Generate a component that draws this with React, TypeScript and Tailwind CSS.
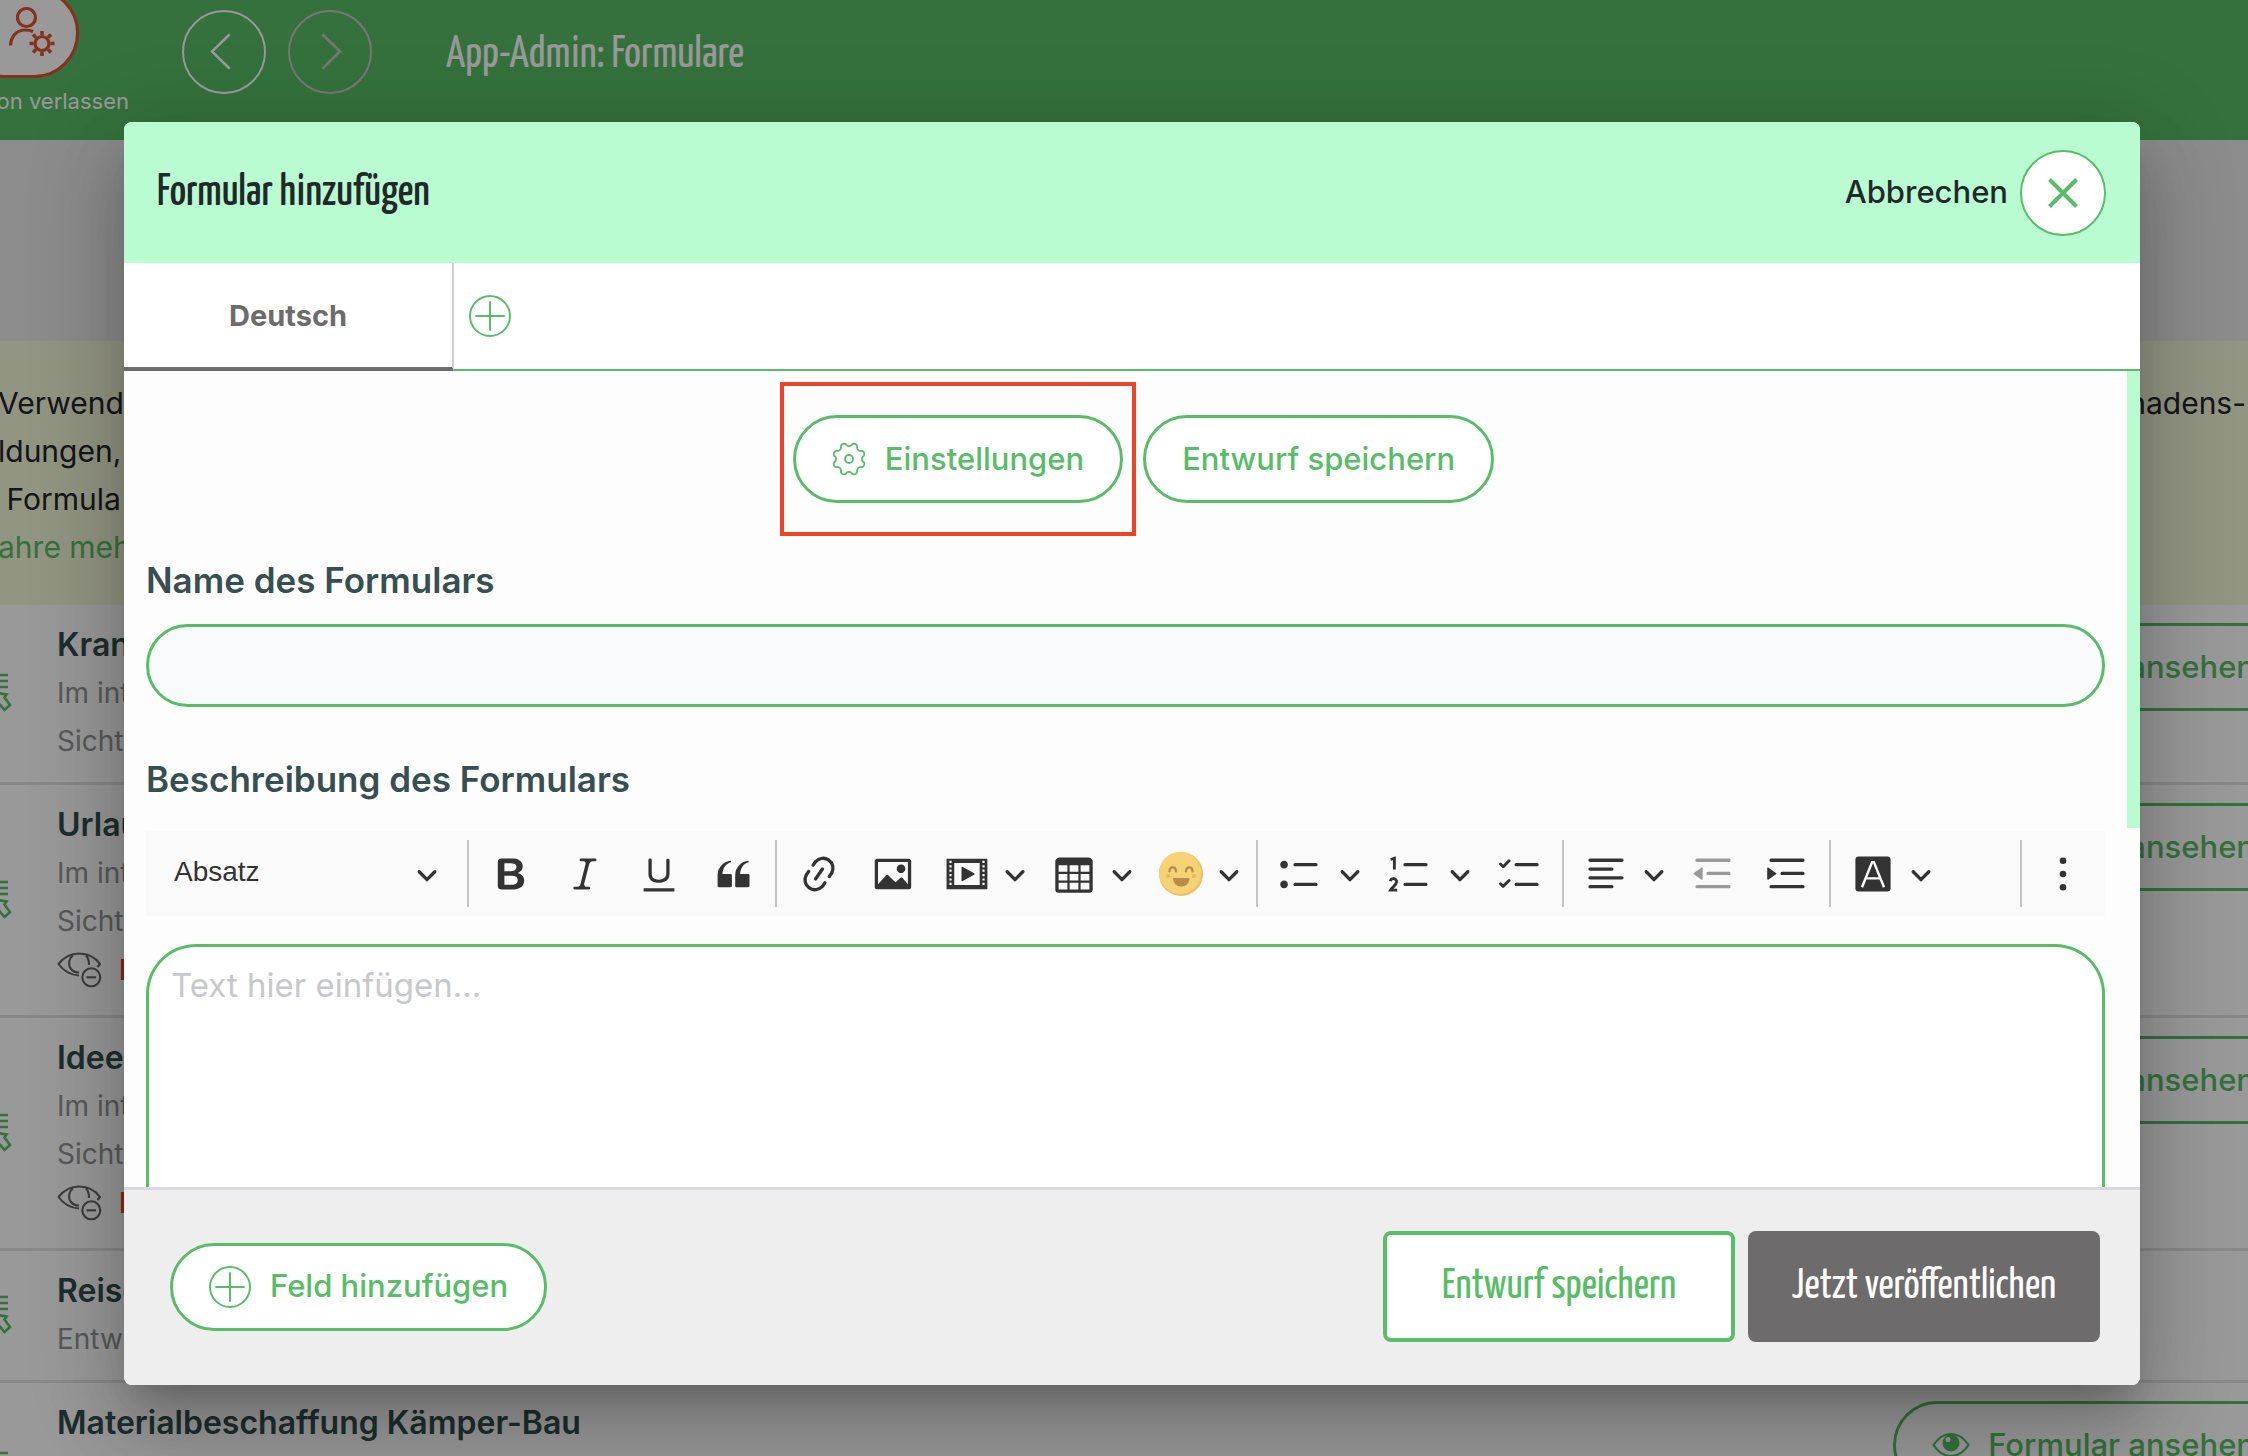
import type { ReactNode } from "react";

const GREEN = "#57bd66";
const INK = "#333333";

/* ---------- icons ---------- */

function PlusCircle() {
  return (
    <svg width="42" height="42" viewBox="0 0 42 42" fill="none" stroke={GREEN} strokeWidth="2" strokeLinecap="round" aria-hidden="true">
      <circle cx="21" cy="21" r="20" />
      <path d="M21 7v28M7 21h28" />
    </svg>
  );
}

const cogPath =
  Array.from({ length: 144 }, (_, i) => {
    const a = (i / 144) * Math.PI * 2;
    const wave = Math.cos(8 * (a - Math.PI / 8));
    const r = 14.6 + 1.7 * Math.sign(wave) * Math.pow(Math.abs(wave), 0.6);
    return `${i ? "L" : "M"}${(17 + r * Math.cos(a)).toFixed(2)} ${(17 + r * Math.sin(a)).toFixed(2)}`;
  }).join("") + "Z";

function Cog() {
  return (
    <svg width="34" height="34" viewBox="0 0 34 34" fill="none" stroke={GREEN} strokeWidth="1.8" strokeLinejoin="round" aria-hidden="true">
      <path d={cogPath} />
      <circle cx="17" cy="17" r="4" />
    </svg>
  );
}

function UserCog() {
  return (
    <svg width="46" height="50" viewBox="0 0 46 50" fill="none" stroke="#e2502f" strokeWidth="3.2" aria-hidden="true">
      <circle cx="17.5" cy="10.5" r="9" />
      <path d="M1.5 38.5C2 29 8 23 16 23c3.500 0 6 .5 8 1.500" />
      <circle cx="33" cy="36.500" r="7" />
      <path
        d="M33 28v-4M33 49v-4M41.500 36.500h4M20.500 36.500h4M39 30.500l3-3M24 45.500l3-3M39 42.500l3 3M24 27.500l3 3"
        strokeWidth="3.600"
      />
    </svg>
  );
}

function FormGlyph() {
  return (
    <svg width="12" height="44" viewBox="0 0 12 44" fill="none" stroke={GREEN} strokeWidth="2.6" aria-hidden="true">
      <path d="M0 2h8M0 8h8M0 14h8" />
      <path d="M-2 20l8.500 1.500-2 3 5.500 7.500-5.500 5-6-7" />
    </svg>
  );
}

function HiddenEye() {
  return (
    <svg width="46" height="38" viewBox="0 0 46 38" fill="none" stroke="#66666a" strokeWidth="2.100" strokeLinejoin="round" aria-hidden="true">
      <path d="M22 24.500C13 24 5.500 18.500 1.500 13 7 6 14 2.500 22 2.500S38 6 43 13l-2.500 3" />
      <path d="M16 4.500c-4.500 3-5 10-2 13.500 2 2.500 5 3.500 8 3.500M29 4.500c2.500 2.500 3 5.500 3 9.500" />
      <circle cx="34.300" cy="26.300" r="9" />
      <path d="M29.500 26.300h9.600" />
    </svg>
  );
}

function Eye() {
  return (
    <svg width="38" height="26" viewBox="0 0 38 26" aria-hidden="true">
      <path d="M1.500 13C6 6 12 2 19 2s13 4 17.500 11C32 20 26 24 19 24S6 20 1.500 13z" fill="none" stroke={GREEN} strokeWidth="2.200" />
      <circle cx="19" cy="11" r="8.500" fill={GREEN} />
      <circle cx="16" cy="7.500" r="2.500" fill="#fff" />
    </svg>
  );
}

function Chevron() {
  return (
    <svg width="22" height="22" viewBox="0 0 10 10" fill={INK} aria-hidden="true">
      <path d="M.941 4.523a.75.75 0 1 1 1.060-1.060l3.006 3.005 3.005-3.005a.75.75 0 1 1 1.060 1.060l-3.549 3.550a.75.75 0 0 1-1.168-.136L.941 4.523z" />
    </svg>
  );
}

function Glyph({ d, children }: { d?: string; children?: ReactNode }) {
  return (
    <svg width="44" height="44" viewBox="0 0 20 20" fill="currentColor" aria-hidden="true">
      {d && <path d={d} />}
      {children}
    </svg>
  );
}

const paths = {
  bold: "M10.187 17H5.773c-.637 0-1.092-.138-1.364-.415-.273-.277-.409-.718-.409-1.323V4.738c0-.617.14-1.062.419-1.332.279-.27.73-.406 1.354-.406h4.680c.69 0 1.288.041 1.793.124.506.083.96.242 1.360.478.341.197.644.447.906.75a3.262 3.262 0 0 1 .808 2.162c0 1.401-.722 2.426-2.167 3.075C15.050 10.175 16 11.315 16 13.010a3.756 3.756 0 0 1-2.296 3.504 6.100 6.100 0 0 1-1.517.377c-.571.073-1.238.11-2 .11zm-.217-6.217H7v4.087h3.069c1.977 0 2.965-.69 2.965-2.072 0-.707-.256-1.220-.768-1.537-.512-.319-1.277-.478-2.296-.478zM7 5.130v3.619h2.606c.729 0 1.292-.067 1.690-.2a1.600 1.600 0 0 0 .91-.765c.165-.267.247-.566.247-.897 0-.707-.26-1.176-.778-1.409-.519-.232-1.310-.348-2.375-.348H7z",
  italic: "m9.586 14.633.021.004c-.036.335.095.655.393.962.082.083.173.15.274.201h1.474a.6.6 0 1 1 0 1.200H5.304a.6.6 0 0 1 0-1.200h1.150c.474-.07.809-.182 1.005-.334.157-.122.291-.32.404-.597l2.416-9.550a1.053 1.053 0 0 0-.281-.823 1.120 1.120 0 0 0-.442-.296H8.150a.6.6 0 0 1 0-1.200h6.443a.6.6 0 1 1 0 1.200h-1.195c-.376.056-.65.155-.823.296-.215.175-.423.439-.623.79l-2.366 9.347z",
  underline: "M3 18v-1.500h14V18zm2.200-8V3.600c0-.4.4-.6.8-.6.3 0 .7.2.7.6v6.200c0 2 1.300 2.800 3.200 2.800 1.900 0 3.400-.9 3.400-2.900V3.600c0-.3.4-.5.8-.5.3 0 .7.2.7.5V10c0 2.700-2.200 4-4.900 4-2.600 0-4.700-1.200-4.700-4z",
  quote: "M3 10.423a6.500 6.500 0 0 1 6.056-6.408l.038.67C6.448 5.423 5.354 7.663 5.220 10H9c.552 0 .5.432.5.986v4.511c0 .554-.448.503-1 .503h-5c-.552 0-.5-.449-.5-1.003v-4.574zm8 0a6.500 6.500 0 0 1 6.056-6.408l.038.67c-2.646.739-3.740 2.979-3.873 5.315H17c.552 0 .5.432.5.986v4.511c0 .554-.448.503-1 .503h-5c-.552 0-.5-.449-.5-1.003v-4.574z",
  link: "m11.077 15 .991-1.416a.75.75 0 1 1 1.229.86l-1.148 1.640a.748.748 0 0 1-.217.206 5.251 5.251 0 0 1-8.503-5.955.741.741 0 0 1 .12-.274l1.147-1.639a.75.75 0 1 1 1.228.86L4.933 10.700l.006.003a3.750 3.750 0 0 0 6.132 4.294l.006.004zm5.494-5.335a.748.748 0 0 1-.12.274l-1.147 1.639a.75.75 0 1 1-1.228-.86l.86-1.230a3.750 3.750 0 0 0-6.144-4.301l-.86 1.229a.75.75 0 0 1-1.229-.86l1.148-1.640a.748.748 0 0 1 .217-.206 5.251 5.251 0 0 1 8.503 5.955zm-4.563-2.532a.75.75 0 0 1 .184 1.045l-3.155 4.505a.75.75 0 1 1-1.229-.86l3.155-4.506a.75.75 0 0 1 1.045-.184z",
  image: "M6.910 10.540c.26-.23.64-.21.88.03l3.360 3.140 2.230-2.060a.64.64 0 0 1 .87 0l2.520 2.970V4.500H3.200v10.120l3.710-4.080zm10.270-7.510c.6 0 1.090.47 1.090 1.050v11.840c0 .59-.49 1.060-1.090 1.060H2.790c-.6 0-1.090-.47-1.090-1.060V4.080c0-.58.49-1.050 1.100-1.050h14.380zm-5.220 5.560a1.960 1.960 0 1 1 3.400-1.960 1.960 1.960 0 0 1-3.400 1.960z",
  media: "M18.680 3.030c.6 0 .59-.03.59.55v12.840c0 .59.01.56-.59.56H1.290c-.6 0-.59.03-.59-.56V3.580c0-.58-.01-.55.6-.55h17.380zM15.770 15V5H4.200v10h11.570zM2 4v1h1V4H2zm0 2v1h1V6H2zm0 2v1h1V8H2zm0 2v1h1v-1H2zm0 2v1h1v-1H2zm0 2v1h1v-1H2zM17 4v1h1V4h-1zm0 2v1h1V6h-1zm0 2v1h1V8h-1zm0 2v1h1v-1h-1zm0 2v1h1v-1h-1zm0 2v1h1v-1h-1zM7.500 7.177a.4.4 0 0 1 .593-.351l5.133 2.824a.4.4 0 0 1 0 .7l-5.133 2.824a.4.4 0 0 1-.593-.35V7.176v.001z",
  table: "M3 6v3h4V6H3zm0 4v3h4v-3H3zm0 4v3h4v-3H3zm5 3h4v-3H8v3zm5 0h4v-3h-4v3zm4-4v-3h-4v3h4zm0-4V6h-4v3h4zm1.500 8a1.500 1.500 0 0 1-1.500 1.500H3A1.500 1.500 0 0 1 1.500 17V4c.222-.863 1.068-1.500 2-1.500h13c.932 0 1.778.637 2 1.500v13zM12 13v-3H8v3h4zm0-4V6H8v3h4z",
  bullets: "M7 5.750c0 .414.336.75.75.75h9.500a.75.75 0 1 0 0-1.500h-9.500a.75.75 0 0 0-.75.75zm-6 0C1 4.784 1.777 4 2.750 4c.966 0 1.750.777 1.750 1.750 0 .966-.777 1.750-1.750 1.750C1.784 7.500 1 6.723 1 5.750zm6 9c0 .414.336.75.75.75h9.500a.75.75 0 1 0 0-1.500h-9.500a.75.75 0 0 0-.75.75zm-6 0c0-.966.777-1.750 1.750-1.750.966 0 1.750.777 1.750 1.750 0 .966-.777 1.750-1.750 1.750-.966 0-1.750-.777-1.750-1.750z",
  numberLines: "M7 5.750c0 .414.336.75.75.75h9.500a.75.75 0 1 0 0-1.500h-9.500a.75.75 0 0 0-.75.75zM7 14.750a.75.75 0 0 1 .75-.75h9.500a.75.75 0 1 1 0 1.500h-9.500a.75.75 0 0 1-.75-.75z",
  todo: "m2.315 14.705 2.224-2.240a.689.689 0 0 1 .963 0 .664.664 0 0 1 0 .949L2.865 16.070a.682.682 0 0 1-.112.089.647.647 0 0 1-.852-.051L.688 14.886a.635.635 0 0 1 0-.903.647.647 0 0 1 .91 0l.717.722zm5.185.045a.75.75 0 0 1 .75-.75h9.500a.75.75 0 1 1 0 1.500h-9.500a.75.75 0 0 1-.75-.75zM2.329 5.745l2.210-2.226a.689.689 0 0 1 .963 0 .664.664 0 0 1 0 .95L2.865 7.125a.685.685 0 0 1-.496.196.644.644 0 0 1-.468-.187L.688 5.912a.635.635 0 0 1 0-.903.647.647 0 0 1 .91 0l.73.736zM7.500 5.750A.75.75 0 0 1 8.250 5h9.500a.75.75 0 1 1 0 1.500h-9.500a.75.75 0 0 1-.75-.75z",
  align: "M2 3.750c0 .414.336.75.75.75h14.500a.75.75 0 1 0 0-1.500H2.750a.75.75 0 0 0-.75.75zm0 8c0 .414.336.75.75.75h14.500a.75.75 0 1 0 0-1.500H2.750a.75.75 0 0 0-.75.75zm0 4c0 .414.336.75.75.75h9.929a.75.75 0 1 0 0-1.500H2.750a.75.75 0 0 0-.75.75zm0-8c0 .414.336.75.75.75h9.929a.75.75 0 1 0 0-1.500H2.750a.75.75 0 0 0-.75.75z",
  outdent: "M2 3.750c0 .414.336.75.75.75h14.500a.75.75 0 1 0 0-1.500H2.750a.75.75 0 0 0-.75.75zm5 6c0 .414.336.75.75.75h9.500a.75.75 0 1 0 0-1.500h-9.500a.75.75 0 0 0-.75.75zM2.750 16.500h14.500a.75.75 0 1 0 0-1.500H2.750a.75.75 0 1 0 0 1.500zM4.700 7.200 1.300 9.500a.4.4 0 0 0 0 .65l3.400 2.300a.4.4 0 0 0 .6-.33V7.530a.4.4 0 0 0-.6-.33z",
  indent: "M2 3.750c0 .414.336.75.75.75h14.500a.75.75 0 1 0 0-1.500H2.750a.75.75 0 0 0-.75.75zm5 6c0 .414.336.75.75.75h9.500a.75.75 0 1 0 0-1.500h-9.500a.75.75 0 0 0-.75.75zM2.750 16.500h14.500a.75.75 0 1 0 0-1.500H2.750a.75.75 0 1 0 0 1.500zM1.600 7.200 5 9.500a.4.4 0 0 1 0 .65l-3.400 2.300a.4.4 0 0 1-.6-.33V7.530a.4.4 0 0 1 .6-.33z",
};

function Smiley() {
  return (
    <svg width="44" height="44" viewBox="0 0 44 44" aria-hidden="true">
      <circle cx="22" cy="22" r="22" fill="#efbd63" />
      <circle cx="21" cy="21" r="21" fill="#f5d273" />
      <circle cx="9" cy="24" r="2.200" fill="#f2b765" />
      <circle cx="35" cy="24" r="2.200" fill="#f2b765" />
      <path d="M10.500 19.500c0-5.500 6.500-5.500 6.500 0M27 19.500c0-5.500 6.500-5.500 6.500 0" fill="none" stroke="#b98a4a" strokeWidth="2.200" strokeLinecap="round" />
      <path d="M14 26h16.500c0 5-3.500 8.500-8.250 8.500S14 31 14 26z" fill="#bb8c48" />
    </svg>
  );
}

/* ---------- toolbar parts ---------- */

function Tool({ label, children, muted }: { label: string; children: ReactNode; muted?: boolean }) {
  return (
    <button type="button" aria-label={label} disabled={muted} className="flex h-[66px] w-[74px] shrink-0 items-center justify-center text-[#333333] disabled:text-[#999999]">
      {children}
    </button>
  );
}

function SplitTool({ label, children, wide }: { label: string; children: ReactNode; wide?: boolean }) {
  return (
    <button
      type="button"
      aria-label={label}
      className={
        wide
          ? "flex h-[66px] w-[110px] shrink-0 items-center gap-[17px] pl-[15px] text-[#333333]"
          : "flex h-[66px] w-[107px] shrink-0 items-center gap-[15px] pl-[15px] text-[#333333]"
      }
    >
      {children}
      <Chevron />
    </button>
  );
}

function Divider() {
  return <span className="mx-[5px] h-[67px] w-[2px] shrink-0 bg-[#c4c4c4]" />;
}

function Toolbar() {
  return (
    <div role="toolbar" aria-label="Editor-Werkzeuge" className="mt-[28px] flex h-[85px] items-center bg-[#fafafa]">
      <div className="grid w-[316px] shrink-0 items-center">
        <select
          aria-label="Absatzformat"
          className="col-start-1 row-start-1 h-[66px] w-full appearance-none bg-transparent pb-1 pl-[28px] font-['Liberation_Sans',sans-serif] text-[28px] text-[#333333]"
        >
          <option>Absatz</option>
        </select>
        <span className="pointer-events-none col-start-1 row-start-1 mr-6 justify-self-end">
          <Chevron />
        </span>
      </div>
      <Divider />
      <Tool label="Fett"><Glyph d={paths.bold} /></Tool>
      <Tool label="Kursiv"><Glyph d={paths.italic} /></Tool>
      <Tool label="Unterstrichen"><Glyph d={paths.underline} /></Tool>
      <Tool label="Zitat"><Glyph d={paths.quote} /></Tool>
      <Divider />
      <Tool label="Link"><Glyph d={paths.link} /></Tool>
      <Tool label="Bild"><Glyph d={paths.image} /></Tool>
      <SplitTool label="Medien"><Glyph d={paths.media} /></SplitTool>
      <SplitTool label="Tabelle"><Glyph d={paths.table} /></SplitTool>
      <SplitTool label="Emoji"><Smiley /></SplitTool>
      <Divider />
      <SplitTool label="Aufzählung" wide><Glyph d={paths.bullets} /></SplitTool>
      <SplitTool label="Nummerierung" wide>
        <Glyph d={paths.numberLines}>
          <path d="M1.200 3.400 2.900 2.800v5.200M1.100 13.300c.2-1.700 3-1.500 2.800.3-.1 1.400-1.800 2.200-2.700 3.700h3" fill="none" stroke="currentColor" strokeWidth="1.300" />
        </Glyph>
      </SplitTool>
      <Tool label="Aufgabenliste"><Glyph d={paths.todo} /></Tool>
      <Divider />
      <SplitTool label="Ausrichtung"><Glyph d={paths.align} /></SplitTool>
      <Tool label="Einzug verkleinern" muted><Glyph d={paths.outdent} /></Tool>
      <Tool label="Einzug vergrößern"><Glyph d={paths.indent} /></Tool>
      <Divider />
      <SplitTool label="Hintergrundfarbe">
        <Glyph>
          <rect x="2" y="2" width="16" height="16" rx="1.500" />
          <path d="M5 16 9.600 4.600h.8L15 16M6.800 12h6.400" fill="none" stroke="#fff" strokeWidth="1.100" />
        </Glyph>
      </SplitTool>
      <span className="grow" />
      <Divider />
      <button type="button" aria-label="Mehr" className="flex h-[66px] w-[78px] shrink-0 items-center justify-center pr-1.5 text-[#333333]">
        <Glyph>
          <circle cx="10" cy="4" r="1.500" />
          <circle cx="10" cy="10" r="1.500" />
          <circle cx="10" cy="16" r="1.500" />
        </Glyph>
      </button>
    </div>
  );
}

/* ---------- page behind the dialog ---------- */

const rows = [
  { title: "Krankmeldung", lines: ["Im internen", "Sichtbar"], hidden: false, view: true },
  { title: "Urlaub", lines: ["Im internen", "Sichtbar"], hidden: true, view: true },
  { title: "Ideen", lines: ["Im internen", "Sichtbar"], hidden: true, view: true },
  { title: "Reise", lines: ["Entwurf"], hidden: false, view: false },
  { title: "Materialbeschaffung Kämper-Bau", lines: ["Im internen", "Sichtbar"], hidden: false, view: true },
];

function Page() {
  return (
    <div className="flex h-full w-full flex-col overflow-hidden bg-white">
      <header className="flex h-[140px] shrink-0 items-start bg-[#58bc64] text-white">
        <div className="-mt-3 w-[129px] shrink-0">
          <button type="button" aria-label="Administration verlassen" className="-ml-10 flex h-[90px] w-[119px] justify-end rounded-full border-[3px] border-[#e2502f] bg-white pt-4 pr-[21px]">
            <UserCog />
          </button>
          <div className="flex justify-end pt-[11px] text-[22px] leading-[24px] whitespace-nowrap">on verlassen</div>
        </div>
        <button type="button" aria-label="Zurück" className="mt-[10px] ml-[53px] flex size-[84px] shrink-0 items-center justify-center rounded-full border-2 border-white">
          <svg width="30" height="38" viewBox="0 0 30 38" fill="none" stroke="currentColor" strokeWidth="2.500" strokeLinecap="round" aria-hidden="true">
            <path d="M20 2 3 18.500 20 35" />
          </svg>
        </button>
        <button type="button" aria-label="Vor" className="mt-[10px] ml-[22px] flex size-[84px] shrink-0 items-center justify-center rounded-full border-2 border-[#c9c5c9] text-[#c9c5c9]">
          <svg width="30" height="38" viewBox="0 0 30 38" fill="none" stroke="currentColor" strokeWidth="2.500" strokeLinecap="round" aria-hidden="true">
            <path d="M8 2l17 16.500L8 35" />
          </svg>
        </button>
        <h1 className="mt-[29px] ml-[74px] font-['Yanone_Kaffeesatz',sans-serif] text-[44px] leading-[54px]">App-Admin: Formulare</h1>
      </header>
      <div className="h-[201px] shrink-0 bg-[#e9e9e9]" />
      <section className="flex shrink-0 justify-between bg-[#f5f9db] pt-[38px] pb-[34px] text-[30px] leading-[48px] text-[#232529]">
        <div className="-ml-0.5 whitespace-pre">
          <p>Verwende</p>
          <p>ldungen,</p>
          <p>{" Formula"}</p>
          <a href="#mehr" className="text-[#57bd66]">ahre mehr</a>
        </div>
        <p className="pr-[2px]">Schadens-</p>
      </section>
      <ul className="shrink-0">
        {rows.map((r) => (
          <li key={r.title} className="flex items-start border-b-[3px] border-[#e4e4e4] pb-[17px]">
            <div className="flex w-[57px] shrink-0 self-stretch pt-[20px]">
              <span className="flex items-center"><FormGlyph /></span>
            </div>
            <div className="pt-[16px] text-[28px] leading-[48px] text-[#939598]">
              <h2 className="text-[32px] font-semibold text-[#324d4e]">{r.title}</h2>
              {r.lines.map((l) => (
                <p key={l}>{l}</p>
              ))}
              {r.hidden && (
                <p className="flex h-[53px] items-center gap-[16px] pb-1 font-semibold text-[#ee4327]">
                  <HiddenEye />
                  Nicht
                </p>
              )}
            </div>
            {r.view && (
              <button type="button" className="mt-[18px] -mr-[46px] ml-auto flex h-[88px] shrink-0 items-center gap-[18px] rounded-full border-[3px] border-[#57bd66] px-[36px] text-[31px] font-medium text-[#57bd66]">
                <Eye />
                Formular ansehen
              </button>
            )}
          </li>
        ))}
      </ul>
    </div>
  );
}

/* ---------- dialog ---------- */

function Pill({ icon, children }: { icon?: ReactNode; children: ReactNode }) {
  return (
    <button type="button" className="flex h-[88px] items-center gap-[19px] rounded-full border-[3px] border-[#57bd66] bg-white px-[36px] text-[31px] font-medium text-[#57bd66]">
      {icon}
      {children}
    </button>
  );
}

function Dialog() {
  return (
    <section
      role="dialog"
      aria-modal="true"
      aria-labelledby="dialog-title"
      className="flex min-h-0 w-full flex-col overflow-hidden rounded-lg bg-white shadow-[0_22px_30px_-14px_rgba(0,0,0,0.2),0_48px_76px_6px_rgba(0,0,0,0.14),0_18px_92px_16px_rgba(0,0,0,0.12)]"
    >
      <header className="flex h-[141px] shrink-0 items-center justify-between bg-[#bafcd1] pr-[34px] pl-[33px]">
        <h2 id="dialog-title" className="pt-0.5 font-['Yanone_Kaffeesatz',sans-serif] text-[44px] leading-[54px] font-medium text-[#22282a]">Formular hinzufügen</h2>
        <button type="button" className="flex items-center gap-[12px] text-[31px] font-medium text-[#22282a]">
          Abbrechen
          <span className="flex size-[86px] items-center justify-center rounded-full border-2 border-[#57bd66] bg-white">
            <svg width="30" height="30" viewBox="0 0 30 30" stroke={GREEN} strokeWidth="4" aria-hidden="true">
              <path d="M1.500 1.500l27 27M28.500 1.500l-27 27" />
            </svg>
          </span>
        </button>
      </header>

      <nav className="flex h-[108px] shrink-0">
        <button type="button" className="w-[330px] border-r-2 border-b-4 border-r-[#cfcfcf] border-b-[#6d6b6b] pt-0.5 text-[29px] font-bold text-[#6d6b6b]">Deutsch</button>
        <div className="flex grow items-center border-b-2 border-[#57bd66] pl-[15px]">
          <button type="button" aria-label="Sprache hinzufügen"><PlusCircle /></button>
        </div>
      </nav>

      <div className="flex min-h-0 grow bg-[#fdfdfd]">
        <form className="flex min-w-0 grow flex-col pr-[22px] pl-[22px]">
          <div className="mt-[11px] flex items-center justify-center gap-[7px] pl-[23px]">
            <div className="border-4 border-[#ee4327] px-[9px] py-[29px]">
              <Pill icon={<Cog />}>Einstellungen</Pill>
            </div>
            <Pill>Entwurf speichern</Pill>
          </div>
          <label htmlFor="form-name" className="mt-[20px] text-[35px] leading-[48px] font-semibold text-[#374f51]">Name des Formulars</label>
          <input id="form-name" type="text" className="mt-[20px] h-[83px] shrink-0 rounded-full border-[3px] border-[#57bd66] bg-[#f9fafc] px-[34px] text-[31px]" />
          <label htmlFor="form-text" className="mt-[48px] text-[35px] leading-[48px] font-semibold text-[#374f51]">Beschreibung des Formulars</label>
          <Toolbar />
          <textarea
            id="form-text"
            placeholder="Text hier einfügen..."
            className="mt-[28px] min-h-0 grow resize-none rounded-t-[50px] border-[3px] border-b-0 border-[#57bd66] bg-white px-[22px] pt-[16px] text-[33px] leading-[44px] placeholder:text-[#c7c8cb]"
          />
        </form>
        <div className="w-[13px] shrink-0">
          <div className="h-[56%] bg-[#bafcd1]" />
        </div>
      </div>

      <footer className="flex shrink-0 items-center justify-between border-t-[3px] border-[#d9d9e2] bg-[#eeeeee] pt-[41px] pr-[40px] pb-[43px] pl-[46px]">
        <Pill icon={<PlusCircle />}>Feld hinzufügen</Pill>
        <div className="flex gap-[13px] font-['Yanone_Kaffeesatz',sans-serif] text-[42px]">
          <button type="button" className="h-[111px] w-[352px] rounded-lg border-4 border-[#57bd66] bg-white text-[#57bd66]">Entwurf speichern</button>
          <button type="button" className="h-[111px] w-[352px] rounded-lg bg-[#6d6b6b] text-white">Jetzt veröffentlichen</button>
        </div>
      </footer>
    </section>
  );
}

export default function App() {
  return (
    <div className="relative h-screen w-full overflow-hidden font-['Inter',sans-serif]">
      <Page />
      <div className="absolute inset-0 flex bg-black/40 pt-[122px] pr-[108px] pb-[71px] pl-[124px]">
        <Dialog />
      </div>
    </div>
  );
}
